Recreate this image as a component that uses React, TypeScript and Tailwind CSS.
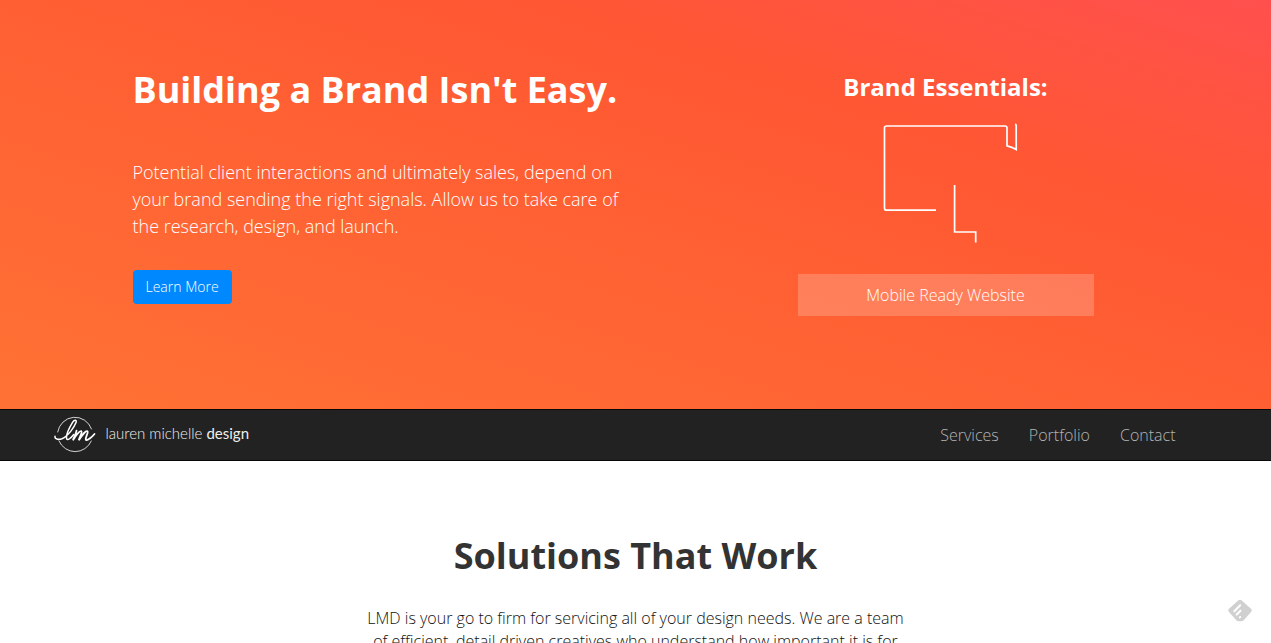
import type { ReactNode } from "react";

function NavLink({ href, children }: { href: string; children: ReactNode }) {
  return (
    <a href={href} className="px-[15px] text-base font-light leading-5 text-[#b4b4b4] hover:text-white">
      {children}
    </a>
  );
}

function DeviceOutline() {
  return (
    <svg
      viewBox="0 0 140 122"
      className="h-[122px] w-[140px]"
      fill="none"
      stroke="#fff"
      strokeWidth="1.7"
      aria-hidden="true"
    >
      <path d="M56 88.2H6.5Q4.5 88.2 4.5 86.2V6Q4.5 4 6.5 4H125Q127 4 127 6V23.8Q132 25 136.2 27.5V4Q136.2 2.5 135.2 2" />
      <path d="M74.6 63V110H95.7V120.5" />
    </svg>
  );
}

function LogoMark() {
  return (
    <svg viewBox="0 0 42 38" className="h-[38px] w-[42px]" fill="none" stroke="#fff" strokeLinecap="round" aria-hidden="true">
      <path d="M3.7 17A17.5 17.5 0 0 1 37.5 14" strokeWidth="0.8" />
      <path d="M5 26A17.6 17.6 0 0 0 37.3 26" strokeWidth="0.8" />
      <path
        d="M1 21.3C.5 24 4 25.2 8 23.7C14.5 21 20.5 11.5 22 7.5C23 5 20.7 4 18.7 7.2C15.8 12 11.8 20 12.6 23.5C13.2 26.5 17.5 22.5 19.7 19.5"
        strokeWidth="1.5"
      />
      <path
        d="M22.5 15.7C22 18.5 20 22.5 18.9 25.3C21.3 21 25.6 15.5 27.4 16.2C28.7 16.8 25.3 22.6 24.8 25.2C27.4 21 31.9 15.4 33.5 16.3C35 17.2 30.7 23 31.9 24.8C33.2 26.2 38 22 40.5 19"
        strokeWidth="1.8"
      />
    </svg>
  );
}

function FeedlyIcon() {
  return (
    <svg viewBox="0 0 24 24" className="size-6" aria-hidden="true">
      <path
        d="M10.2 1.4Q12 0 13.8 1.4L23 9.7Q24.5 11.3 23 13L15.7 21.3Q14.7 22.2 13.4 22.2H10.6Q9.3 22.2 8.3 21.3L1 13Q-.5 11.3 1 9.7Z"
        fill="#d0d0d0"
      />
      <g stroke="#fff" strokeWidth="2" strokeLinecap="round">
        <path d="M6.3 12.2L12.2 6.3" />
        <path d="M8.7 15.5L12.5 11.7" />
        <path d="M11.8 18.4L12.2 18" />
      </g>
    </svg>
  );
}

export default function App() {
  return (
    <div className="h-screen overflow-hidden bg-white font-['Open_Sans',sans-serif] text-[#333]">
      <header className="bg-[linear-gradient(18deg,#ff7234_0%,#ff5733_70%,#ff504e_100%)] text-white">
        <div className="mx-auto grid max-w-[1006px] grid-cols-[minmax(0,500px)_296px] justify-between pt-16 pr-[45px] pb-[93px]">
          <div>
            <h1 className="text-4xl leading-[52px] font-bold">Building a Brand Isn't Easy.</h1>
            <p className="mt-[43px] text-lg leading-[27px] font-light">
              Potential client interactions and ultimately sales, depend on your brand sending the right signals. Allow
              us to take care of the research, design, and launch.
            </p>
            <button type="button" className="mt-[30px] h-[34px] rounded bg-[#08f] px-[13px] text-sm font-light">
              Learn More
            </button>
          </div>
          <div className="flex flex-col items-center pt-2">
            <h2 className="text-2xl leading-[30px] font-bold">Brand Essentials:</h2>
            <div className="mt-5 pl-2">
              <DeviceOutline />
            </div>
            <p className="mt-[30px] w-full bg-white/20 text-center text-base leading-[42px] font-light">
              Mobile Ready Website
            </p>
          </div>
        </div>
      </header>

      <nav className="border-y border-[#080808] bg-[#222]">
        <div className="mx-auto flex h-[50px] max-w-[1170px] items-center justify-between pr-[30px]">
          <a href="#home" className="flex items-center gap-[10px] pb-[2px] pl-[3px] text-[#eee]">
            <LogoMark />
            <span className="pb-[2px] font-['Lato','Open_Sans',sans-serif] text-[15px] leading-5 font-light">
              lauren michelle <span className="font-normal">design</span>
            </span>
          </a>
          <div className="flex">
            <NavLink href="#services">Services</NavLink>
            <NavLink href="#portfolio">Portfolio</NavLink>
            <NavLink href="#contact">Contact</NavLink>
          </div>
        </div>
      </nav>

      <main className="mx-auto max-w-[546px] pt-[70px] text-center">
        <h2 className="text-4xl leading-[50px] font-bold">Solutions That Work</h2>
        <p className="mt-[26px] text-base leading-[23px] font-light text-[#111]">
          LMD is your go to firm for servicing all of your design needs. We are a team of efficient, detail driven
          creatives who understand how important it is for
        </p>
      </main>

      <button type="button" aria-label="Open feed reader" className="fixed right-[19px] bottom-5 size-6">
        <FeedlyIcon />
      </button>
    </div>
  );
}
